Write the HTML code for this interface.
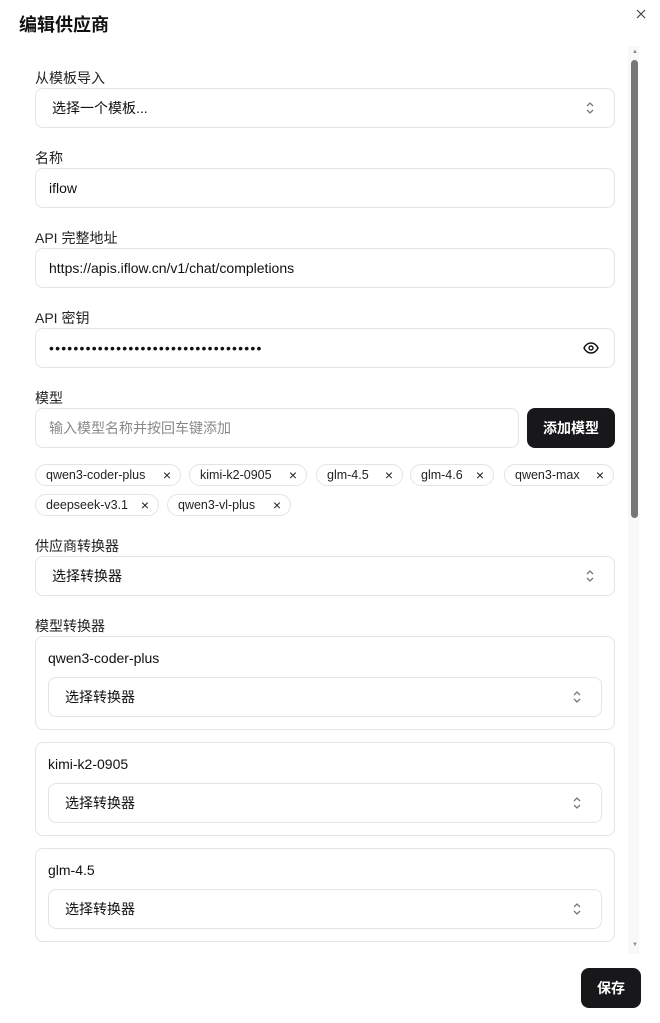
<!DOCTYPE html>
<html><head><meta charset="utf-8"><style>
*{box-sizing:border-box;margin:0;padding:0}
body{width:660px;height:1023px;background:#fff;font-family:"Liberation Sans","Noto Sans CJK SC",sans-serif;color:#111;position:relative;overflow:hidden;font-size:14px}
.abs{position:absolute}
h1{position:absolute;left:19px;top:11px;font-size:18px;font-weight:bold}
.lbl{position:absolute;left:35px;font-size:14px;color:#222}
.inp{position:absolute;left:35px;width:580px;height:40px;border:1px solid #e4e4e7;border-radius:8px;padding-left:13px;line-height:38px;font-size:14px}
.sel{padding-left:16px}
.chev{position:absolute;right:18px;top:12px}
.tag{position:absolute;height:22px;border:1px solid #e4e4e7;border-radius:11px;font-size:12.5px;line-height:20px;padding-left:10px;color:#222}
.tag span{position:absolute;right:9px;top:0;font-size:14px}
.card{position:absolute;left:35px;width:580px;height:94px;border:1px solid #e4e4e7;border-radius:8px}
.card .t{position:absolute;left:12px;top:13px;font-size:14px}
.card .inp{left:12px;top:40px;width:554px;padding-left:16px}
.btn{position:absolute;background:#18181b;color:#fff;border-radius:8px;font-size:14px;font-weight:bold;text-align:center}
</style></head><body>
<h1>编辑供应商</h1>
<svg class="abs" style="left:636px;top:9px" width="10" height="10" viewBox="0 0 10 10"><path d="M1 1l8 8M9 1l-8 8" stroke="#444" stroke-width="1.2"/></svg>
<div class="abs" style="left:628px;top:46px;width:11px;height:908px;background:#f8f8f8"></div>
<div class="abs" style="left:632px;top:49px;font-size:6px;color:#888">▲</div>
<div class="abs" style="left:632px;top:942px;font-size:6px;color:#888">▼</div>
<div class="abs" style="left:631px;top:60px;width:7px;height:458px;background:#777;border-radius:4px"></div>

<div class="lbl" style="top:68px">从模板导入</div>
<div class="inp sel" style="top:88px">选择一个模板...<svg class="chev" width="12" height="14" viewBox="0 0 12 14"><path d="M3 5l3-3 3 3M3 9l3 3 3-3" fill="none" stroke="#777" stroke-width="1.3"/></svg></div>
<div class="lbl" style="top:148px">名称</div>
<div class="inp" style="top:168px">iflow</div>
<div class="lbl" style="top:228px">API 完整地址</div>
<div class="inp" style="top:248px">https://apis.iflow.cn/v1/chat/completions</div>
<div class="lbl" style="top:308px">API 密钥</div>
<div class="inp" style="top:328px;font-size:14px;letter-spacing:1.2px">•••••••••••••••••••••••••••••••••••<svg class="chev" style="top:12px;right:15px" width="16" height="14" viewBox="0 0 16 14"><path d="M1 7C3 3 5.5 2 8 2s5 1 7 5c-2 4-4.5 5-7 5S3 11 1 7z" fill="none" stroke="#111" stroke-width="1.4"/><circle cx="8" cy="7" r="2" fill="none" stroke="#111" stroke-width="1.4"/></svg></div>
<div class="lbl" style="top:388px">模型</div>
<div class="inp" style="top:408px;width:484px;color:#888">输入模型名称并按回车键添加</div>
<div class="btn" style="left:527px;top:408px;width:88px;height:40px;line-height:40px">添加模型</div>

<div class="tag" style="left:35px;top:464px;width:146px">qwen3-coder-plus<span>×</span></div>
<div class="tag" style="left:189px;top:464px;width:118px">kimi-k2-0905<span>×</span></div>
<div class="tag" style="left:316px;top:464px;width:87px">glm-4.5<span>×</span></div>
<div class="tag" style="left:410px;top:464px;width:84px">glm-4.6<span>×</span></div>
<div class="tag" style="left:504px;top:464px;width:110px">qwen3-max<span>×</span></div>
<div class="tag" style="left:35px;top:494px;width:124px">deepseek-v3.1<span>×</span></div>
<div class="tag" style="left:167px;top:494px;width:124px">qwen3-vl-plus<span>×</span></div>

<div class="lbl" style="top:536px">供应商转换器</div>
<div class="inp sel" style="top:556px">选择转换器<svg class="chev" width="12" height="14" viewBox="0 0 12 14"><path d="M3 5l3-3 3 3M3 9l3 3 3-3" fill="none" stroke="#777" stroke-width="1.3"/></svg></div>
<div class="lbl" style="top:616px">模型转换器</div>

<div class="card" style="top:636px"><div class="t">qwen3-coder-plus</div><div class="inp">选择转换器<svg class="chev" width="12" height="14" viewBox="0 0 12 14"><path d="M3 5l3-3 3 3M3 9l3 3 3-3" fill="none" stroke="#777" stroke-width="1.3"/></svg></div></div>
<div class="card" style="top:742px"><div class="t">kimi-k2-0905</div><div class="inp">选择转换器<svg class="chev" width="12" height="14" viewBox="0 0 12 14"><path d="M3 5l3-3 3 3M3 9l3 3 3-3" fill="none" stroke="#777" stroke-width="1.3"/></svg></div></div>
<div class="card" style="top:848px"><div class="t">glm-4.5</div><div class="inp">选择转换器<svg class="chev" width="12" height="14" viewBox="0 0 12 14"><path d="M3 5l3-3 3 3M3 9l3 3 3-3" fill="none" stroke="#777" stroke-width="1.3"/></svg></div></div>
<div class="abs" style="left:0;top:950px;width:626px;height:73px;background:#fff"></div>

<div class="btn" style="left:581px;top:968px;width:60px;height:40px;line-height:40px">保存</div>
</body></html>
